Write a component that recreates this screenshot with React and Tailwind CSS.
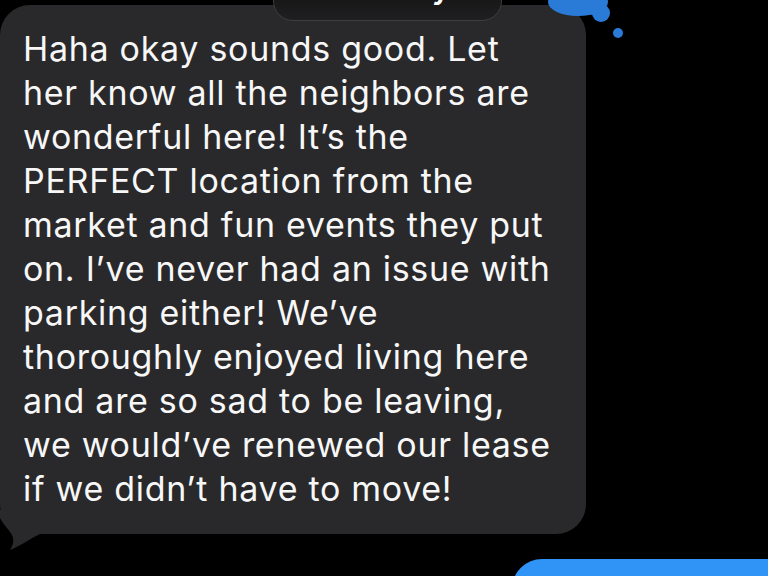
import React from 'react';

const LINES = [
    'Haha okay sounds good. Let',
    'her know all the neighbors are',
    'wonderful here! It’s the',
    'PERFECT location from the',
    'market and fun events they put',
    'on. I’ve never had an issue with',
    'parking either! We’ve',
    'thoroughly enjoyed living here',
    'and are so sad to be leaving,',
    'we would’ve renewed our lease',
    'if we didn’t have to move!',
];

function Splash() {
    return (
        <svg className="absolute left-[540px] top-0" width="90" height="45" viewBox="0 0 90 45">
            <g fill="#2a7bd8">
                <ellipse cx="38" cy="2" rx="30" ry="14" />
                <circle cx="61" cy="13" r="9" />
                <circle cx="54" cy="4" r="11" />
                <circle cx="78" cy="33" r="5" />
            </g>
        </svg>
    );
}

function Tail() {
    return (
        <svg className="absolute left-0 top-[510px]" width="60" height="45" viewBox="0 0 60 45">
            <path d="M0 0 L0 8 C4 16 12 22 13 28 C14 34 11 38 10 40 C18 37 28 30 40 24 L40 0 Z" fill="#29292b" />
        </svg>
    );
}

export default function App() {
    return (
        <div className="relative w-[768px] h-[576px] overflow-hidden bg-black" style={{ fontFamily: 'Inter, "Liberation Sans", sans-serif' }}>
            <div className="flex flex-col pt-[5px]">
                <div className="w-[586px] h-[529px] rounded-[30px] bg-[#29292b] pl-[23px] pt-[22px]">
                    <div className="text-[34px] leading-[44px] text-[#f7f7f7] tracking-[0.7px]">
                        {LINES.map((line) => (
                            <div key={line} className="whitespace-nowrap">{line}</div>
                        ))}
                    </div>
                </div>
                <div className="ml-[512px] mt-[25px] w-[300px] h-[60px] rounded-[30px] bg-[#3093f6]"></div>
            </div>

            <Tail />
            <Splash />

            {/* chip peeking at top */}
            <div className="absolute left-[273px] top-[-20px] w-[229px] h-[41px] rounded-b-[20px] rounded-t-[4px] border border-[#3d3d3f] bg-gradient-to-b from-[#111] to-[#1f1f21] overflow-hidden">
                <div className="absolute left-[158px] top-[-8px] text-[30px] font-semibold leading-[30px] text-white">y</div>
            </div>
        </div>
    );
}
